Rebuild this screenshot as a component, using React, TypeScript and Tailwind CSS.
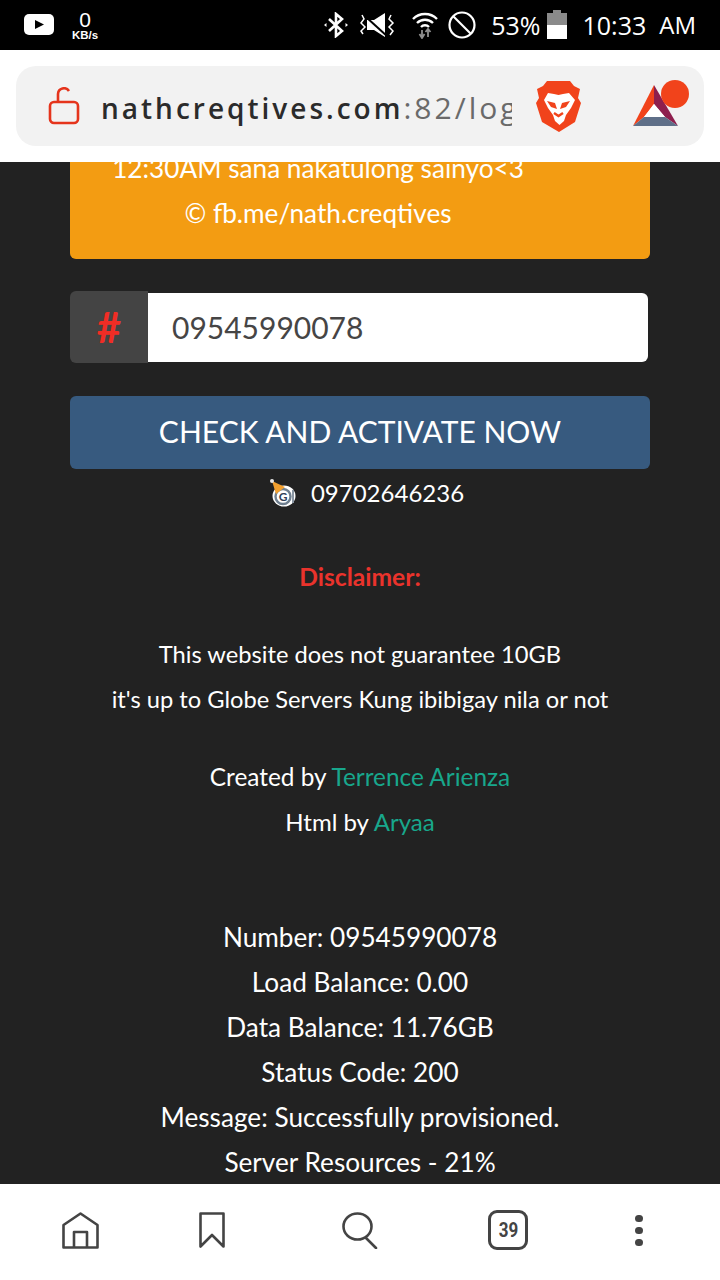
function StatusBar() {
  return (
    <div className="h-[50px] bg-black flex items-center text-white font-['Open_Sans',sans-serif]">
      <svg width="30" height="22" viewBox="0 0 30 22" className="ml-6">
        <rect width="30" height="21" rx="5" fill="#fff" />
        <path d="M11 6l9 4.500-9 4.500z" fill="#000" />
      </svg>
      <div className="ml-[15px] w-[32px] flex flex-col items-center font-['Liberation_Sans',sans-serif]">
        <span className="text-[21px] leading-[20px]">0</span>
        <span className="text-[11.5px] leading-[11px] font-bold">KB/s</span>
      </div>
      <div className="ml-auto flex items-center pr-[24px]">
        <svg width="24" height="26" viewBox="0 0 24 26" fill="none" stroke="#fff" strokeWidth="2.600">
          <path d="M5 7l13 12-6 5V2l6 5L5 19" />
          <path d="M0 13l2.500-2v4zM24 13l-2.500-2v4z" fill="#fff" stroke="none" />
        </svg>
        <svg width="38" height="26" viewBox="0 0 38 26" fill="none" className="ml-[11px]">
          <path d="M8 8h7l11-7v24L15 18H8z" fill="#fff" />
          <path d="M8 4l22 20" stroke="#000" strokeWidth="2" transform="translate(-1 1)" />
          <path d="M32 3l-2 4 4 4-4 4 4 4-3 4M3 3l2 4-3 4 4 4-4 4 2 3" stroke="#fff" strokeWidth="1.500" />
        </svg>
        <svg width="26" height="27" viewBox="0 0 26 27" fill="none" stroke="#fff" strokeWidth="2.400" className="ml-[15px]">
          <path d="M1 7a17 17 0 0 1 24 0" />
          <path d="M5 11a11.500 11.500 0 0 1 16 0" />
          <path d="M9 15a5.500 5.500 0 0 1 8 0" />
          <path d="M10 26v-8M7.500 22l2.500 4 2.500-4M16 17v8M13.500 20l2.500-3 2.500 3" stroke="#8f8f8f" strokeWidth="1.800" />
        </svg>
        <svg width="28" height="28" viewBox="0 0 28 28" fill="none" stroke="#fff" strokeWidth="2.200" className="ml-[10px]">
          <circle cx="14" cy="14" r="12.500" />
          <path d="M5 5l18 18" />
        </svg>
        <span className="ml-[15px] text-[25px] leading-none">53%</span>
        <svg width="20" height="30" viewBox="0 0 20 30" className="ml-[7px]">
          <rect x="6" y="0" width="8" height="3" fill="#8a8a8a" />
          <rect x="0" y="3" width="20" height="12" fill="#8a8a8a" />
          <rect x="0" y="15" width="20" height="14" fill="#fff" />
        </svg>
        <span className="ml-[15px] text-[25px] leading-none">10:33</span>
        <span className="ml-[13px] text-[24px] leading-none">AM</span>
      </div>
    </div>
  )
}

function BraveLogo() {
  return (
    <svg width="45" height="52" viewBox="0 0 45 52">
      <path d="M11 1h23l4 5 6 3-2 9 3 5-6 19-16 10L6 42 0 23l3-5-2-9 6-3z" fill="#f1431b" />
      <path d="M12 13l6 1 4.500 1 4.500-1 6-1 6 7-4 8-5 7-2 6-4.500 4-4.500-4-2-6-5-7-4-8z" fill="#fff" />
      <path d="M11 21l8 2 2 6-6-2zM34 21l-8 2-2 6 6-2z" fill="#f1431b" />
      <path d="M18 33l4.500 3 4.500-3" fill="none" stroke="#f1431b" strokeWidth="2.400" />
    </svg>
  )
}

function BatLogo() {
  return (
    <svg width="58" height="48" viewBox="0 0 58 48">
      <path d="M22 5L1 46l11-9 10-13z" fill="#f1431b" />
      <path d="M22 5l24 41-13-9-11-13z" fill="#8e1f4e" />
      <path d="M1 46h45l-13-9H12z" fill="#5f6f88" />
      <path d="M22 24l11 13H12z" fill="#fff" />
      <circle cx="43" cy="14" r="14" fill="#f1431b" />
    </svg>
  )
}

function AddressBar() {
  return (
    <div className="h-[112px] bg-white px-4 pt-4">
      <div className="h-20 rounded-[20px] bg-[#f2f2f2] flex items-center pl-[32px]">
        <svg width="32" height="38" viewBox="0 0 32 38" fill="none" stroke="#e5341c" strokeWidth="2.600">
          <rect x="2" y="15" width="28" height="21" rx="4" />
          <path d="M10 15V7a6 6 0 0 1 11-3" />
        </svg>
        <div className="ml-[21px] w-[411px] mt-[3px] overflow-hidden whitespace-nowrap font-['Open_Sans',sans-serif] font-semibold text-[28px] tracking-[3px] text-[#2b2b2b]">
          nathcreqtives.com<span className="text-[#6a6a6a] font-normal text-[30px] tracking-[3px]">:82/login</span>
        </div>
        <div className="ml-[24px]"><BraveLogo /></div>
        <div className="ml-[51px] -mt-[4px]"><BatLogo /></div>
      </div>
    </div>
  )
}

function BottomNav() {
  return (
    <div className="h-24 bg-white flex items-center pl-[62px] pb-[4px]">
      <svg width="37" height="37" viewBox="0 0 37 37" fill="none" stroke="#444" strokeWidth="2.600" strokeLinejoin="round">
        <path d="M1.500 13L18.500 1.500l17 11.500v22.500h-34z" />
        <path d="M12 35.500V20h13v15.500" />
      </svg>
      <svg width="26" height="37" viewBox="0 0 26 37" fill="none" stroke="#444" strokeWidth="2.600" strokeLinejoin="round" className="ml-[100px]">
        <path d="M1.500 1.500h23v33L13 23 1.500 34.500z" />
      </svg>
      <svg width="36" height="37" viewBox="0 0 36 37" fill="none" stroke="#444" strokeWidth="2.600" className="ml-[117px]">
        <ellipse cx="15.500" cy="14.500" rx="14" ry="13" />
        <path d="M24 26l10 10" strokeLinecap="round" />
      </svg>
      <div className="ml-[110px] w-10 h-10 rounded-[9px] border-[3px] border-[#444] flex items-center justify-center text-[20px] font-bold text-[#444] font-['Roboto',sans-serif]">
        <span className="scale-x-[0.85]">39</span>
      </div>
      <div className="ml-[107px] flex flex-col gap-[5px]">
        <div className="w-2 h-[7px] rounded-full bg-[#444]" />
        <div className="w-2 h-[7px] rounded-full bg-[#444]" />
        <div className="w-2 h-[7px] rounded-full bg-[#444]" />
      </div>
    </div>
  )
}

export default function App() {
  return (
    <div className="w-[720px] h-[1280px] flex flex-col overflow-hidden bg-[#222222] font-['Lato',sans-serif]">
      <StatusBar />
      <AddressBar />
      <main className="flex-1 min-h-0 overflow-hidden px-[70px] text-white text-[24px] leading-[45px] text-center">
        <div className="-mt-[16px] h-[113px] bg-[#f39c12] rounded-b-[6px] pr-[84px] text-[26.2px]">
          <p>12:30AM sana nakatulong sainyo&lt;3</p>
          <p>© fb.me/nath.creqtives</p>
        </div>

        <div className="mt-[32px] flex items-center w-[578px]">
          <div className="w-[78px] h-[72px] bg-[#444444] rounded-l-[6px] flex items-center justify-center text-[#f02d25] text-[42px] font-bold">#</div>
          <div className="flex-1 h-[69px] bg-white rounded-r-[6px] pl-6 text-left text-[#464545] text-[30px] leading-[69px]">09545990078</div>
        </div>

        <button className="mt-[33px] w-full h-[73px] pb-[2px] bg-[#375a7f] rounded-[6px] text-[30px] text-white">CHECK AND ACTIVATE NOW</button>

        <div className="mt-[1px] pl-[13px] flex items-center justify-center h-[45px]">
          <svg width="28" height="29" viewBox="0 0 28 29">
            <ellipse cx="15" cy="18" rx="11.500" ry="10.500" fill="#fff" />
            <circle cx="14" cy="18.500" r="7.500" fill="none" stroke="#6f7f8f" strokeWidth="2.400" />
            <path d="M24 12v13" stroke="#8a96a3" strokeWidth="2" />
            <text x="14" y="23" fontSize="12" fontWeight="700" textAnchor="middle" fill="#2f4058" fontFamily="Lato">G</text>
            <path d="M3 3l13 6-9 7z" fill="#f2a02f" />
            <circle cx="3" cy="3" r="2" fill="#e8e8e8" />
          </svg>
          <span className="ml-[14px]">09702646236</span>
        </div>

        <p className="mt-[39px] text-[#ea332c] font-bold text-[24.6px]">Disclaimer:</p>
        <div className="mt-[33px] text-[23.7px]">
          <p>This website does not guarantee 10GB</p>
          <p>it's up to Globe Servers Kung ibibigay nila or not</p>
        </div>

        <p className="mt-[32px] text-[24.4px]">Created by <span className="text-[#18a78c]">Terrence Arienza</span></p>
        <p>Html by <span className="text-[#18a78c]">Aryaa</span></p>

        <div className="mt-[71px] text-[26.2px]">
          <p>Number: 09545990078</p>
          <p>Load Balance: 0.00</p>
          <p>Data Balance: 11.76GB</p>
          <p>Status Code: 200</p>
          <p>Message: Successfully provisioned.</p>
          <p>Server Resources - 21%</p>
        </div>
      </main>
      <BottomNav />
    </div>
  )
}
